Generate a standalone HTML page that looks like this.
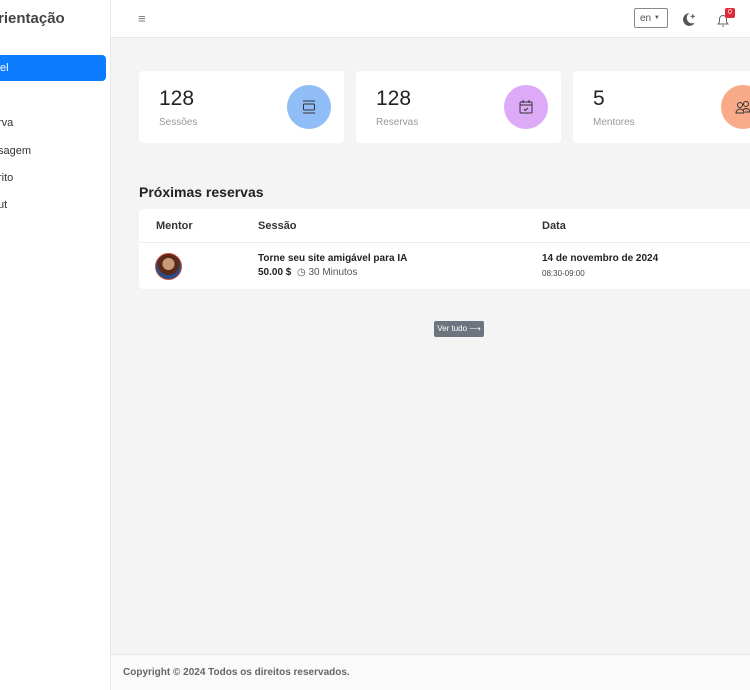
<!DOCTYPE html>
<html><head><meta charset="utf-8"><style>
*{box-sizing:border-box;margin:0;padding:0}
body{width:750px;height:690px;overflow:hidden;background:#f4f4f5;font-family:"Liberation Sans",sans-serif;color:#222;position:relative}
.side{position:absolute;left:0;top:0;width:111px;height:690px;background:#fff;border-right:1px solid #e8e8e8}
.logo{position:absolute;left:-2px;top:10px;font-size:15px;font-weight:bold;color:#444}
.side .act{position:absolute;left:-10px;top:55px;width:116px;height:26px;background:#0d7cff;border-radius:4px;color:#fff;font-size:11px;padding:7px 10px}
.side .it{position:absolute;left:-2px;font-size:11px;color:#333}
.top{position:absolute;left:111px;top:0;right:0;height:38px;background:#fff;border-bottom:1px solid #e8e8e8}
.card{position:absolute;top:71px;width:205px;height:72px;background:#fff;border-radius:4px}
.card .n{position:absolute;left:20px;top:16px;font-size:21px;color:#222}
.card .l{position:absolute;left:20px;top:46px;font-size:10px;color:#999}
.card .c{position:absolute;left:148px;top:14px;width:44px;height:44px;border-radius:50%;display:flex;align-items:center;justify-content:center}
h2{position:absolute;left:139px;top:184px;font-size:14px;font-weight:bold;color:#222}
.tbl{position:absolute;left:139px;top:209px;width:620px;height:80px;background:#fff;border-radius:4px}
.th{position:absolute;top:11px;font-size:11px;font-weight:bold;color:#333}
.foot{position:absolute;left:111px;top:654px;right:0;height:36px;background:#fafafa;border-top:1px solid #e8e8e8;font-size:10px;font-weight:bold;color:#666;padding:12px 12px}
</style></head><body>
<div class="side">
<div class="logo">rientação</div>
<div class="act">el</div>
<div class="it" style="top:117px">rva</div>
<div class="it" style="top:145px">sagem</div>
<div class="it" style="top:172px">rito</div>
<div class="it" style="top:199px">ut</div>
</div>
<div class="top">
<div style="position:absolute;left:27px;top:11px;font-size:13px;color:#777">≡</div>
<div style="position:absolute;left:523px;top:8px;width:34px;height:20px;border:1px solid #888;border-radius:2px;font-size:10px;color:#555;padding:4px 5px;white-space:nowrap">en <span style="font-size:6px;vertical-align:2px">▼</span></div>
<svg style="position:absolute;left:569px;top:11px" width="17" height="17" viewBox="0 0 16 16"><path d="M9 2a6 6 0 1 0 5 9A5 5 0 0 1 9 2z" fill="#555"/><path d="M12 3v4M10 5h4" stroke="#555" stroke-width="1"/></svg>
<svg style="position:absolute;left:605px;top:13px" width="14" height="15" viewBox="0 0 14 15"><path d="M2 11h10l-1.5-2V6a3.5 3.5 0 0 0-7 0v3z M6 13h2" fill="none" stroke="#666" stroke-width="1"/></svg>
<div style="position:absolute;left:614px;top:8px;width:10px;height:10px;background:#e0283a;border-radius:2px;color:#fff;font-size:7px;text-align:center;line-height:10px">0</div>
</div>
<div class="card" style="left:139px"><div class="n">128</div><div class="l">Sessões</div><div class="c" style="background:#90bdf5"><svg width="16" height="14" viewBox="0 0 16 14"><path d="M2 1h12M2 13h12" stroke="#333"/><rect x="2.5" y="4" width="11" height="6" rx="1" fill="none" stroke="#333"/></svg></div></div>
<div class="card" style="left:356px"><div class="n">128</div><div class="l">Reservas</div><div class="c" style="background:#ddaaf7"><svg width="16" height="16" viewBox="0 0 16 16"><rect x="2" y="3" width="12" height="11" rx="1" fill="none" stroke="#333"/><path d="M2 6h12M5 1v3M11 1v3M6 10l1.5 1.5L10 9" stroke="#333" fill="none"/></svg></div></div>
<div class="card" style="left:573px"><div class="n">5</div><div class="l">Mentores</div><div class="c" style="background:#f9aa88"><svg width="16" height="14" viewBox="0 0 16 14"><circle cx="5" cy="5" r="2.5" fill="none" stroke="#333"/><circle cx="11" cy="4" r="2.5" fill="none" stroke="#333"/><path d="M1 13a4 4 0 0 1 8 0zM8 10a4 4 0 0 1 7 2h-5" fill="none" stroke="#333"/></svg></div></div>
<h2>Próximas reservas</h2>
<div class="tbl">
<div class="th" style="left:17px">Mentor</div>
<div class="th" style="left:119px">Sessão</div>
<div class="th" style="left:403px">Data</div>
<div style="position:absolute;left:0;right:0;top:33px;border-top:1px solid #eee"></div>
<div style="position:absolute;left:16px;top:44px;width:27px;height:27px;border-radius:50%;background:radial-gradient(circle at 50% 40%,#c99a78 0 30%,#5b2a1a 32% 55%,#2a4d8a 57%);border:1px solid #c9503a"></div>
<div style="position:absolute;left:119px;top:44px;font-size:10px;font-weight:bold">Torne seu site amigável para IA</div>
<div style="position:absolute;left:119px;top:58px;font-size:10px"><b>50.00 $</b> &nbsp;<span style="color:#555">◷ 30 Minutos</span></div>
<div style="position:absolute;left:403px;top:44px;font-size:10px;font-weight:bold">14 de novembro de 2024</div>
<div style="position:absolute;left:403px;top:60px;font-size:8px;color:#444">08:30-09:00</div>
</div>
<div style="position:absolute;left:434px;top:321px;width:50px;height:16px;background:#6c757d;border-radius:2px;color:#fff;font-size:8px;text-align:center;line-height:16px">Ver tudo ⟶</div>
<div class="foot">Copyright © 2024 Todos os direitos reservados.</div>
</body></html>
